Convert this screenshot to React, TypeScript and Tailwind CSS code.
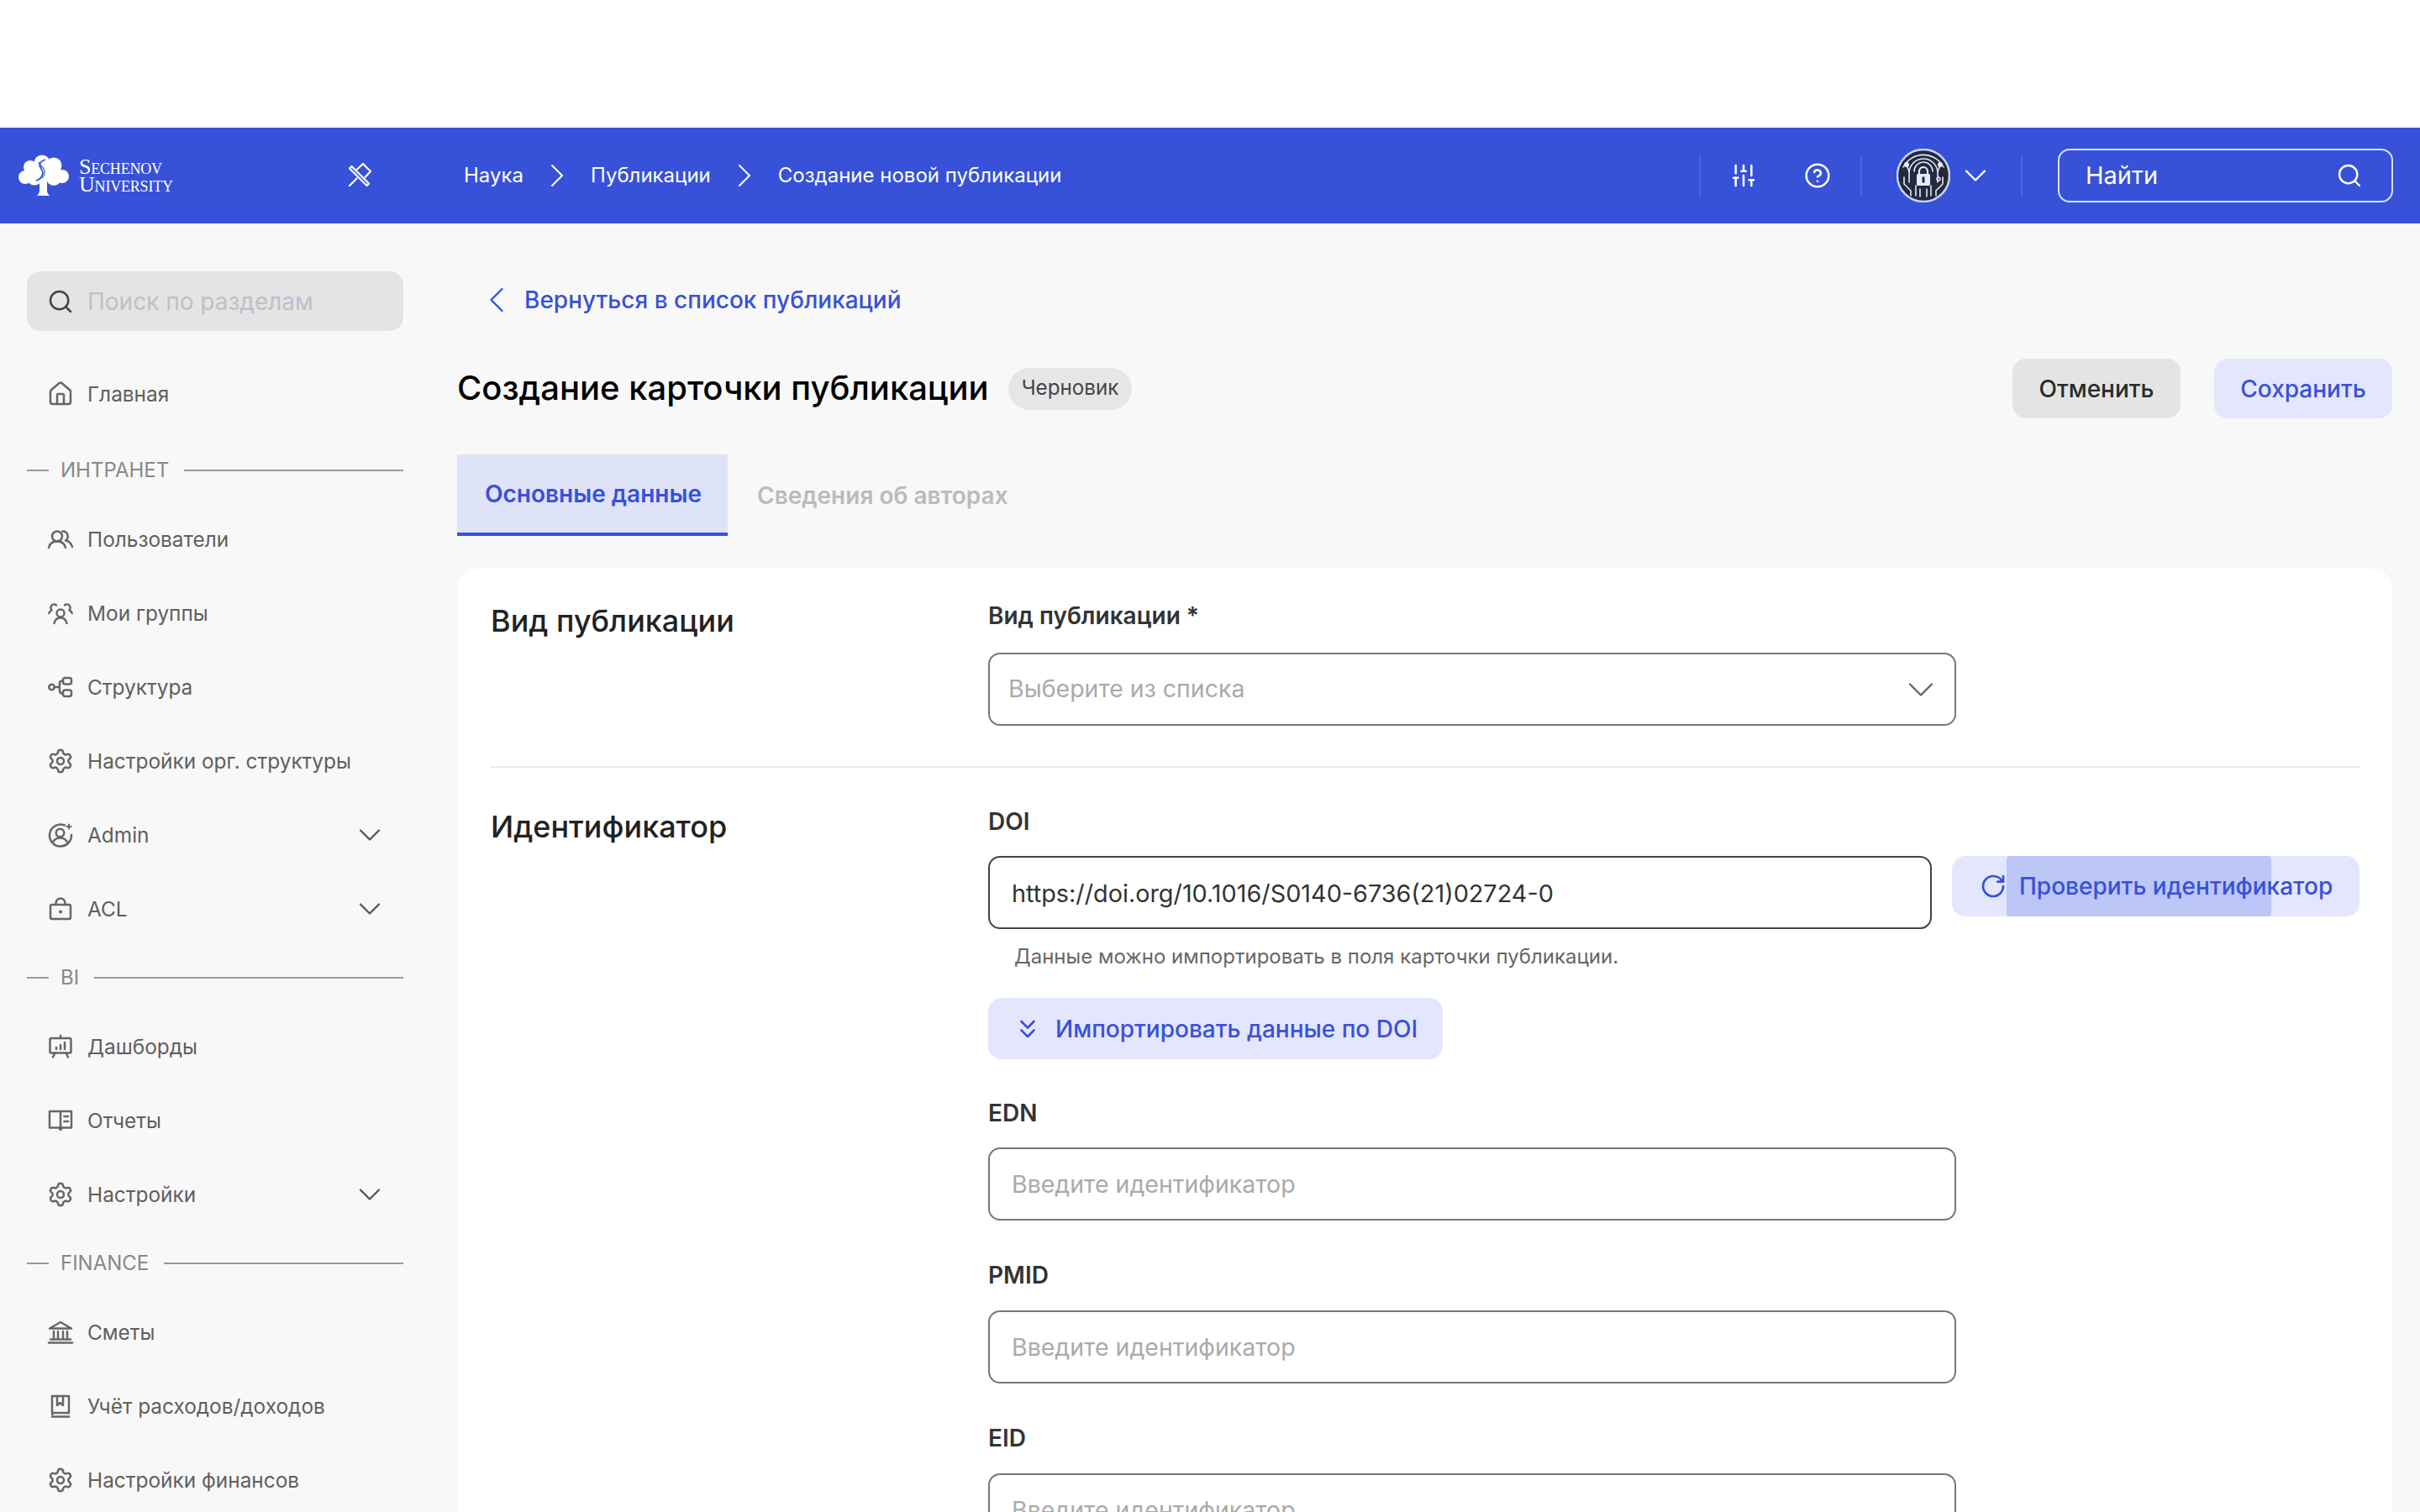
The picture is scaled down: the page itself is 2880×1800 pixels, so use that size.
import React from "react";
import {
  Search, House, SlidersVertical, CircleHelp, ChevronDown, ChevronRight, ChevronLeft,
  Settings, RotateCw, ChevronsDown,
} from "lucide-react";

const ic = "w-8 h-8 text-[#666] shrink-0";
const sw = 1.9;

function Glyph({ children }: { children: React.ReactNode }) {
  return (
    <svg viewBox="0 0 32 32" className={ic} fill="none" stroke="currentColor" strokeWidth="2.5" strokeLinecap="round" strokeLinejoin="round">
      {children}
    </svg>
  );
}

const UsersIcon = () => (
  <Glyph>
    <circle cx="12" cy="12.500" r="6" />
    <path d="M2 26c1-4.500 4.800-7.500 10-7.500s9 3 10 7.500" />
    <path d="M18.500 6.500a6 6 0 0 1 3.500 11c4 .8 6.900 3.600 8 7.500" />
  </Glyph>
);

const GroupIcon = () => (
  <Glyph>
    <circle cx="16" cy="16" r="4.500" />
    <path d="M8.500 28c.8-3.800 3.700-6.500 7.500-6.500s6.700 2.700 7.500 6.500" />
    <path d="M11 6.500a4 4 0 0 0-5.500 5.800M5.500 12.300C4 13 2.800 14.300 2.300 16" />
    <path d="M21 6.500a4 4 0 0 1 5.500 5.800c1.500.7 2.700 2 3.200 3.700" />
  </Glyph>
);

const StructureIcon = () => (
  <Glyph>
    <circle cx="5.500" cy="16" r="3.200" />
    <rect x="19" y="5" width="10" height="7.500" rx="2.500" />
    <rect x="19" y="19.500" width="10" height="7.500" rx="2.500" />
    <path d="M8.700 16H13c1.500 0 2-1 2-2.500V11c0-1.500 1-2.500 4-2.500M15 16v5c0 1.500 1 2.500 4 2.500" />
  </Glyph>
);

const AdminIcon = () => (
  <Glyph>
    <path d="M21 4.500A13 13 0 1 0 29 16" />
    <circle cx="15.500" cy="13.500" r="4.800" />
    <path d="M7 24.500c1.500-3 4.800-5 8.500-5s7 2 8.500 5" />
    <path d="M26 3.500v5M23.500 6h5" strokeWidth="2" />
  </Glyph>
);

const AclIcon = () => (
  <Glyph>
    <rect x="4" y="11" width="24" height="17" rx="2" />
    <path d="M10.500 11V9a5.500 5.500 0 0 1 11 0v2" />
    <circle cx="16" cy="19.500" r="0.800" fill="currentColor" />
  </Glyph>
);

const BoardIcon = () => (
  <Glyph>
    <path d="M16 3v3" />
    <rect x="3.500" y="6" width="25" height="17.500" rx="1.500" />
    <path d="M11 19v-2M16 19v-5M21 19v-8" />
    <path d="M9.500 23.500 7 28.500M22.500 23.500l2.500 5" />
  </Glyph>
);

const ReportIcon = () => (
  <Glyph>
    <path d="M16 24.500H3V5h13zM16 5h13v19.500H16" />
    <path d="M20.500 11h4.500M20.500 17h4.500" />
    <path d="M14 24.500l2 2.500 2-2.500" />
  </Glyph>
);

const BankIcon = () => (
  <Glyph>
    <path d="M3 11.500 16 4l13 7.500z" />
    <path d="M8 15v8M13 15v8M19 15v8M24 15v8" />
    <path d="M4 24.500h24M2 28.500h28" />
  </Glyph>
);

const LedgerIcon = () => (
  <Glyph>
    <path d="M6 24V4h20v20H9c-1.800 0-3 .6-3 2" />
    <path d="M12 4v11l3.500-3 3.500 3V4" />
    <path d="M6 28.500h20" />
  </Glyph>
);

const PinIcon = () => (
  <svg viewBox="0 0 32 32" className="w-8 h-8 shrink-0" fill="none" stroke="currentColor" strokeWidth="2.200" strokeLinecap="round" strokeLinejoin="round">
    <path d="M6.500 5 4 7.500 24.500 28 27 25.500z" />
    <path d="M13 8.500 20 2l9 9-6.500 7" />
    <path d="M12.500 19.500 4 28" />
  </svg>
);

type Row = { label: string; icon: React.ReactNode; more?: boolean } | { section: string };

const stroke = { className: ic, strokeWidth: sw };

const rows: Row[] = [
  { section: "ИНТРАНЕТ" },
  { label: "Пользователи", icon: <UsersIcon /> },
  { label: "Мои группы", icon: <GroupIcon /> },
  { label: "Структура", icon: <StructureIcon /> },
  { label: "Настройки орг. структуры", icon: <Settings {...stroke} /> },
  { label: "Admin", icon: <AdminIcon />, more: true },
  { label: "ACL", icon: <AclIcon />, more: true },
  { section: "BI" },
  { label: "Дашборды", icon: <BoardIcon /> },
  { label: "Отчеты", icon: <ReportIcon /> },
  { label: "Настройки", icon: <Settings {...stroke} />, more: true },
  { section: "FINANCE" },
  { label: "Сметы", icon: <BankIcon /> },
  { label: "Учёт расходов/доходов", icon: <LedgerIcon /> },
  { label: "Настройки финансов", icon: <Settings {...stroke} /> },
];

function NavRow({ label, icon, more }: { label: string; icon: React.ReactNode; more?: boolean }) {
  return (
    <div className="h-[88px] flex items-center pl-[24px] pr-[18px] gap-[16px] text-[24.4px] text-[#5f5f5f]">
      {icon}
      <span className="flex-1 whitespace-nowrap">{label}</span>
      {more && <ChevronDown className="w-[44px] h-[44px] text-[#555]" strokeWidth={1.3} />}
    </div>
  );
}

function TreeLogo() {
  return (
    <svg viewBox="0 0 60 50" className="w-[60px] h-[50px] shrink-0">
      <g fill="#fff">
        <circle cx="28" cy="10" r="9.500" />
        <circle cx="14" cy="15" r="8" />
        <circle cx="42" cy="13" r="9.500" />
        <circle cx="8" cy="27" r="8" />
        <circle cx="52" cy="26" r="8" />
        <circle cx="19" cy="27" r="9.500" />
        <circle cx="42" cy="28" r="9" />
        <circle cx="30" cy="20" r="12" />
        <path d="M25 30h9v13c0 2 1 4 3 6H22c2-2 3-4 3-6z" />
      </g>
      <path d="M32 6c-6 2-8 5-6 9s5 6 1 12c-1 2-3 3-6 4" fill="none" stroke="#3751d8" strokeWidth="1.800" />
      <path d="M24 9c1 4 6 6 7 10s-1 6-3 9" fill="none" stroke="#3751d8" strokeWidth="1.100" />
    </svg>
  );
}

function Avatar() {
  return (
    <svg viewBox="0 0 64 64" className="w-16 h-16 shrink-0">
      <circle cx="32" cy="32" r="31" fill="#232a3d" stroke="#c9d2f5" strokeWidth="2.500" />
      <g fill="none" stroke="#e4e8f7" strokeWidth="1.600" strokeLinecap="round">
        <path d="M8 22a27 27 0 0 1 48 0" />
        <path d="M15 40V29a17 17 0 0 1 34 0v11" />
        <path d="M21 27a11 11 0 0 1 22 0" />
        <path d="M12 20l3 7M52 20l-3 7" />
        <path d="M9 34v8l8 8v6M55 34v8l-8 8v6" />
        <path d="M23 44v12M41 44v12M28 48v9M36 48v9" />
      </g>
      <circle cx="12" cy="19" r="3" fill="#e4e8f7" />
      <circle cx="52" cy="19" r="3" fill="#e4e8f7" />
      <circle cx="50" cy="36" r="2" fill="none" stroke="#e4e8f7" strokeWidth="1.400" />
      <rect x="24" y="30" width="16" height="14" rx="1.500" fill="#e8ebf7" />
      <path d="M27 30v-3a5 5 0 0 1 10 0v3" fill="none" stroke="#e8ebf7" strokeWidth="2.200" />
      <rect x="30.500" y="33.500" width="3" height="7" fill="#232a3d" />
    </svg>
  );
}

function Label({ children, className = "" }: { children: React.ReactNode; className?: string }) {
  return <div className={`h-[36px] leading-[36px] text-[28px] font-semibold text-[#333] ${className}`}>{children}</div>;
}

function IdField({ className = "" }: { className?: string }) {
  return (
    <div className={`w-[1152px] h-[87px] rounded-[14px] border-2 border-[#777] bg-white flex items-center pl-[26px] pt-[1px] text-[28.500px] text-[#aaa] ${className}`}>
      Введите идентификатор
    </div>
  );
}

export default function App() {
  return (
    <div className="h-[1800px] overflow-hidden bg-white font-['Inter','Noto_Sans',sans-serif]">
      <div className="h-[152px]" />
      <header className="h-[114px] bg-[#3751d8] flex items-center text-white">
        <div className="w-[552px] flex items-center pl-[22px] shrink-0">
          <TreeLogo />
          <div className="ml-[12px] w-[130px] text-[26px] leading-[21px] [font-variant-caps:small-caps] font-['Liberation_Serif',serif] tracking-[-0.2px]">
            Sechenov
            <br />
            University
          </div>
          <div className="ml-[188px]">
            <PinIcon />
          </div>
        </div>
        <nav className="flex items-center text-[24px] whitespace-nowrap">
          <span>Наука</span>
          <ChevronRight className="w-12 h-12 mx-[16px]" strokeWidth={1} />
          <span>Публикации</span>
          <ChevronRight className="w-12 h-12 mx-[16px]" strokeWidth={1} />
          <span>Создание новой публикации</span>
        </nav>
        <div className="ml-auto flex items-center pr-[32px]">
          <div className="w-[2px] h-[50px] bg-[#4d64e2]" />
          <div className="w-[190px] flex items-center justify-center gap-[56px]">
            <SlidersVertical className="w-8 h-8" strokeWidth={1.9} />
            <CircleHelp className="w-8 h-8" strokeWidth={1.9} />
          </div>
          <div className="w-[2px] h-[50px] bg-[#4d64e2]" />
          <div className="w-[189px] flex items-center pl-[41px] gap-[8px]">
            <Avatar />
            <ChevronDown className="w-[44px] h-[44px]" strokeWidth={1.3} />
          </div>
          <div className="w-[2px] h-[50px] bg-[#4d64e2]" />
          <div className="ml-[42px] w-[399px] h-[64px] rounded-[14px] border-2 border-[#dbe0fa] flex items-center justify-between pl-[31px] pr-[34px] text-[29px]">
            <span>Найти</span>
            <Search className="w-8 h-8" strokeWidth={1.8} />
          </div>
        </div>
      </header>

      <div className="flex bg-[#f8f8f8] h-[1534px]">
        <aside className="w-[544px] shrink-0 pt-[57px] pl-[32px] pr-[64px]">
          <div className="h-[71px] rounded-[16px] bg-[#e4e4e4] flex items-center pl-[24px] gap-[16px] text-[28px] text-[#bcc0cc]">
            <Search className="w-8 h-8 text-[#444] shrink-0" strokeWidth={1.9} />
            <span>Поиск по разделам</span>
          </div>
          <div className="mt-[31px]">
            <NavRow label="Главная" icon={<House {...stroke} />} />
            {rows.map((r) =>
              "section" in r ? (
                <div key={r.section} className={`flex items-center text-[24px] text-[#888] ${r.section === "ИНТРАНЕТ" ? "h-[75px] pb-[1px] mt-[10px]" : "h-[76px]"}`}>
                  <div className="w-[26px] h-[2px] bg-[#999]" />
                  <span className="ml-[14px] mr-[18px]">{r.section}</span>
                  <div className="flex-1 h-[2px] bg-[#999]" />
                </div>
              ) : (
                <NavRow key={r.label} {...r} />
              )
            )}
          </div>
        </aside>

        <main className="flex-1 pr-[33px]">
          <div className="mt-[71px] h-[40px] pl-[21px] flex items-center gap-[7px] text-[28px] font-medium text-[#3851d9] whitespace-nowrap">
            <ChevronLeft className="w-[52px] h-[52px] shrink-0" strokeWidth={1.1} />
            <span>Вернуться в список публикаций</span>
          </div>

          <div className="mt-[50px] h-[71px] flex items-center">
            <h1 className="pb-[2px] text-[40px] font-medium text-black whitespace-nowrap">Создание карточки публикации</h1>
            <span className="ml-[23px] h-[50px] px-[16px] rounded-full bg-[#e6e6e6] flex items-center text-[24.200px] text-[#444] whitespace-nowrap">Черновик</span>
            <button className="ml-auto w-[200px] h-[71px] rounded-[16px] bg-[#e4e4e4] text-[28px] font-medium text-[#2a2a2a]">Отменить</button>
            <button className="ml-[40px] w-[212px] h-[71px] rounded-[16px] bg-[#e3e6fd] text-[28px] font-medium text-[#3851d9]">Сохранить</button>
          </div>

          <div className="mt-[43px] flex items-stretch h-[97px] whitespace-nowrap text-[28px] font-semibold">
            <div className="w-[322px] bg-[#dfe3f7] border-b-4 border-[#3851dc] flex items-center justify-center pl-[2px] text-[#3851d9]">Основные данные</div>
            <div className="ml-[35px] flex items-center text-[#bbbbbb]">Сведения об авторах</div>
          </div>

          <section className="mt-[39px] bg-white rounded-t-[24px] pl-[40px] pr-[39px] h-[1200px]">
            <div className="flex pt-[38px] pb-[48px] border-b-2 border-[#e8e8e8]">
              <h2 className="w-[592px] text-[36px] font-medium leading-[48px] text-[#222]">Вид публикации</h2>
              <div>
                <Label>Вид публикации *</Label>
                <div className="mt-[26px] w-[1152px] h-[87px] rounded-[14px] border-2 border-[#777] flex items-center justify-between pl-[22px] pr-[14px] text-[28.500px] text-[#aaa]">
                  <span>Выберите из списка</span>
                  <ChevronDown className="w-[52px] h-[52px] text-[#666]" strokeWidth={1.1} />
                </div>
              </div>
            </div>

            <div className="flex pt-[46px]">
              <h2 className="w-[592px] text-[36px] font-medium leading-[48px] text-[#222]">Идентификатор</h2>
              <div className="flex-1">
                <Label>DOI</Label>
                <div className="mt-[23px] flex items-start gap-[24px]">
                  <div className="w-[1123px] h-[87px] rounded-[14px] border-2 border-[#444] flex items-center pl-[26px] pt-[2px] text-[28.800px] text-[#333]">
                    https://doi.org/10.1016/S0140-6736(21)02724-0
                  </div>
                  <button className="relative flex-1 h-[72px] rounded-[16px] bg-[#e3e6fd] flex items-center pl-[33px] gap-[15px] text-[28px] font-medium text-[#3851d9] whitespace-nowrap">
                    <span className="absolute left-[65px] w-[315px] inset-y-0 bg-[#bcc6f7] rounded-[4px]" />
                    <RotateCw className="relative w-8 h-8" strokeWidth={2} />
                    <span className="relative">Проверить идентификатор</span>
                  </button>
                </div>
                <div className="mt-[17px] pl-[31px] h-[32px] leading-[32px] text-[24px] text-[#666]">Данные можно импортировать в поля карточки публикации.</div>
                <button className="mt-[33px] h-[73px] w-[541px] rounded-[16px] bg-[#e3e6fd] flex items-center pl-[29px] gap-[15px] text-[28px] font-medium text-[#3851d9] whitespace-nowrap">
                  <ChevronsDown className="w-9 h-9" strokeWidth={1.8} />
                  <span>Импортировать данные по DOI</span>
                </button>
                <Label className="mt-[46px]">EDN</Label>
                <IdField className="mt-[23px]" />
                <Label className="mt-[47px]">PMID</Label>
                <IdField className="mt-[24px]" />
                <Label className="mt-[47px]">EID</Label>
                <IdField className="mt-[24px]" />
              </div>
            </div>
          </section>
        </main>
      </div>
    </div>
  );
}
